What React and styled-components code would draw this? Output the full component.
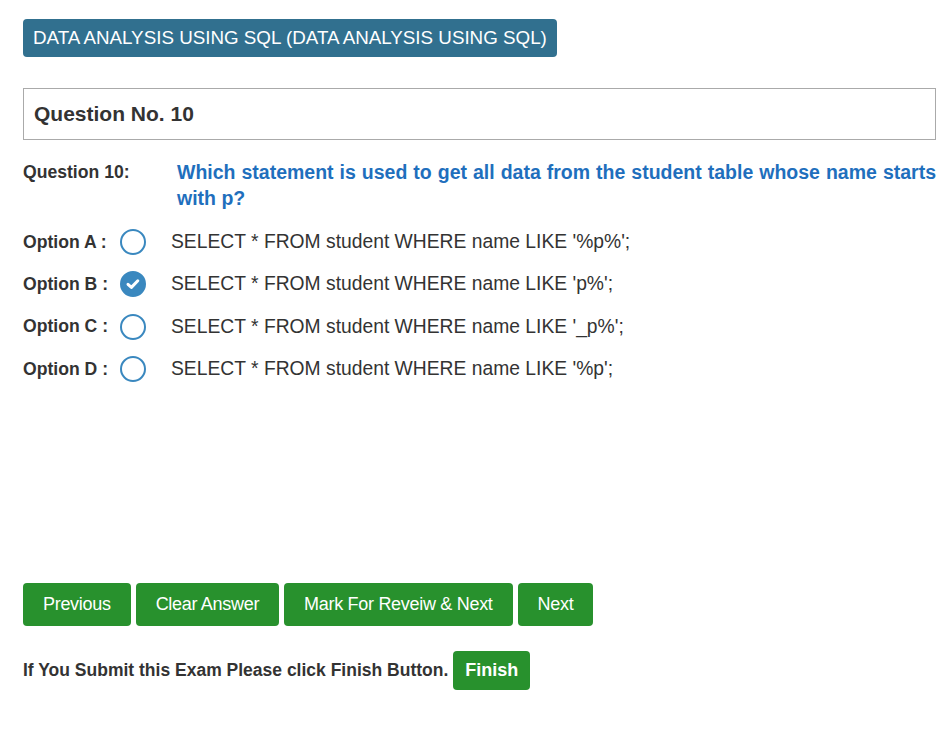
import styled, { createGlobalStyle } from "styled-components";

const Global = createGlobalStyle`
  body {
    margin: 0;
    background: #fff;
    font-family: "Liberation Sans", Arial, sans-serif;
    color: #333;
  }
`;

const options = [
  { key: "A", text: "SELECT * FROM student WHERE name LIKE '%p%';" },
  { key: "B", text: "SELECT * FROM student WHERE name LIKE 'p%';", checked: true },
  { key: "C", text: "SELECT * FROM student WHERE name LIKE '_p%';" },
  { key: "D", text: "SELECT * FROM student WHERE name LIKE '%p';" },
];

export default function App() {
  return (
    <>
      <Global />
      <Page>
        <SubjectBadge>DATA ANALYSIS USING SQL (DATA ANALYSIS USING SQL)</SubjectBadge>
        <QuestionBox>Question No. 10</QuestionBox>
        <QuestionRow>
          <QuestionLabel>Question 10:</QuestionLabel>
          <QuestionText>
            Which statement is used to get all data from the student table whose name starts with p?
          </QuestionText>
        </QuestionRow>
        <OptionList>
          {options.map((o) => (
            <OptionRow key={o.key}>
              <OptionLabel>Option {o.key} :</OptionLabel>
              <Radio $checked={o.checked}>
                {o.checked && (
                  <svg width="16" height="16" viewBox="0 0 16 16">
                    <path d="M3 8.3 L6.4 11.4 L12.8 4.8" fill="none" stroke="#fff" strokeWidth="3" strokeLinecap="round" strokeLinejoin="round" />
                  </svg>
                )}
              </Radio>
              <OptionText>{o.text}</OptionText>
            </OptionRow>
          ))}
        </OptionList>
        <ButtonBar>
          <GreenButton>Previous</GreenButton>
          <GreenButton>Clear Answer</GreenButton>
          <GreenButton>Mark For Reveiw &amp; Next</GreenButton>
          <GreenButton>Next</GreenButton>
        </ButtonBar>
        <FinishRow>
          <FinishNote>If You Submit this Exam Please click Finish Button.</FinishNote>
          <FinishButton>Finish</FinishButton>
        </FinishRow>
      </Page>
    </>
  );
}

const Page = styled.div`
  padding: 19px 16px 0 23px;
  display: flex;
  flex-direction: column;
  align-items: flex-start;
`;

const SubjectBadge = styled.div`
  background: #31708f;
  color: #fff;
  font-size: 18.8px;
  height: 38px;
  line-height: 38px;
  padding: 0 10px;
  border-radius: 4px;
`;

const QuestionBox = styled.div`
  margin-top: 31px;
  align-self: stretch;
  border: 1px solid #aaa;
  height: 50px;
  line-height: 50px;
  padding: 0 10px;
  font-size: 21px;
  font-weight: bold;
  color: #333;
`;

const QuestionRow = styled.div`
  margin-top: 17px;
  align-self: stretch;
  display: flex;
`;

const QuestionLabel = styled.div`
  width: 154px;
  flex-shrink: 0;
  font-size: 17.6px;
  font-weight: bold;
  line-height: 30px;
  color: #333;
`;

const QuestionText = styled.div`
  flex: 1;
  font-size: 19.5px;
  font-weight: bold;
  line-height: 26px;
  padding-top: 2px;
  color: #1f6fbd;
  text-align: justify;
`;

const OptionList = styled.div`
  margin-top: 10px;
  display: flex;
  flex-direction: column;
`;

const OptionRow = styled.div`
  display: flex;
  align-items: center;
  height: 42.3px;
`;

const OptionLabel = styled.div`
  width: 97px;
  font-size: 17.6px;
  font-weight: bold;
  color: #333;
`;

const Radio = styled.span`
  box-sizing: border-box;
  width: 26px;
  height: 26px;
  border-radius: 50%;
  border: 2px solid #3a88bf;
  background: ${(p) => (p.$checked ? "#3a88bf" : "#fff")};
  display: flex;
  align-items: center;
  justify-content: center;
  margin-right: 25px;
`;

const OptionText = styled.div`
  font-size: 19.3px;
  color: #333;
`;

const ButtonBar = styled.div`
  margin-top: 193px;
  display: flex;
  gap: 5px;
`;

const GreenButton = styled.button`
  background: #28912d;
  color: #fff;
  border: none;
  border-radius: 4px;
  height: 43px;
  padding: 0 20px;
  font-family: "Liberation Sans", Arial, sans-serif;
  font-size: 18px;
  letter-spacing: -0.3px;
`;

const FinishRow = styled.div`
  margin-top: 25px;
  display: flex;
  align-items: center;
  gap: 5px;
`;

const FinishNote = styled.span`
  font-size: 17.5px;
  font-weight: bold;
  color: #333;
`;

const FinishButton = styled.button`
  background: #28912d;
  color: #fff;
  border: none;
  border-radius: 4px;
  height: 39px;
  padding: 0 12px;
  font-family: "Liberation Sans", Arial, sans-serif;
  font-size: 18px;
  font-weight: bold;
`;
